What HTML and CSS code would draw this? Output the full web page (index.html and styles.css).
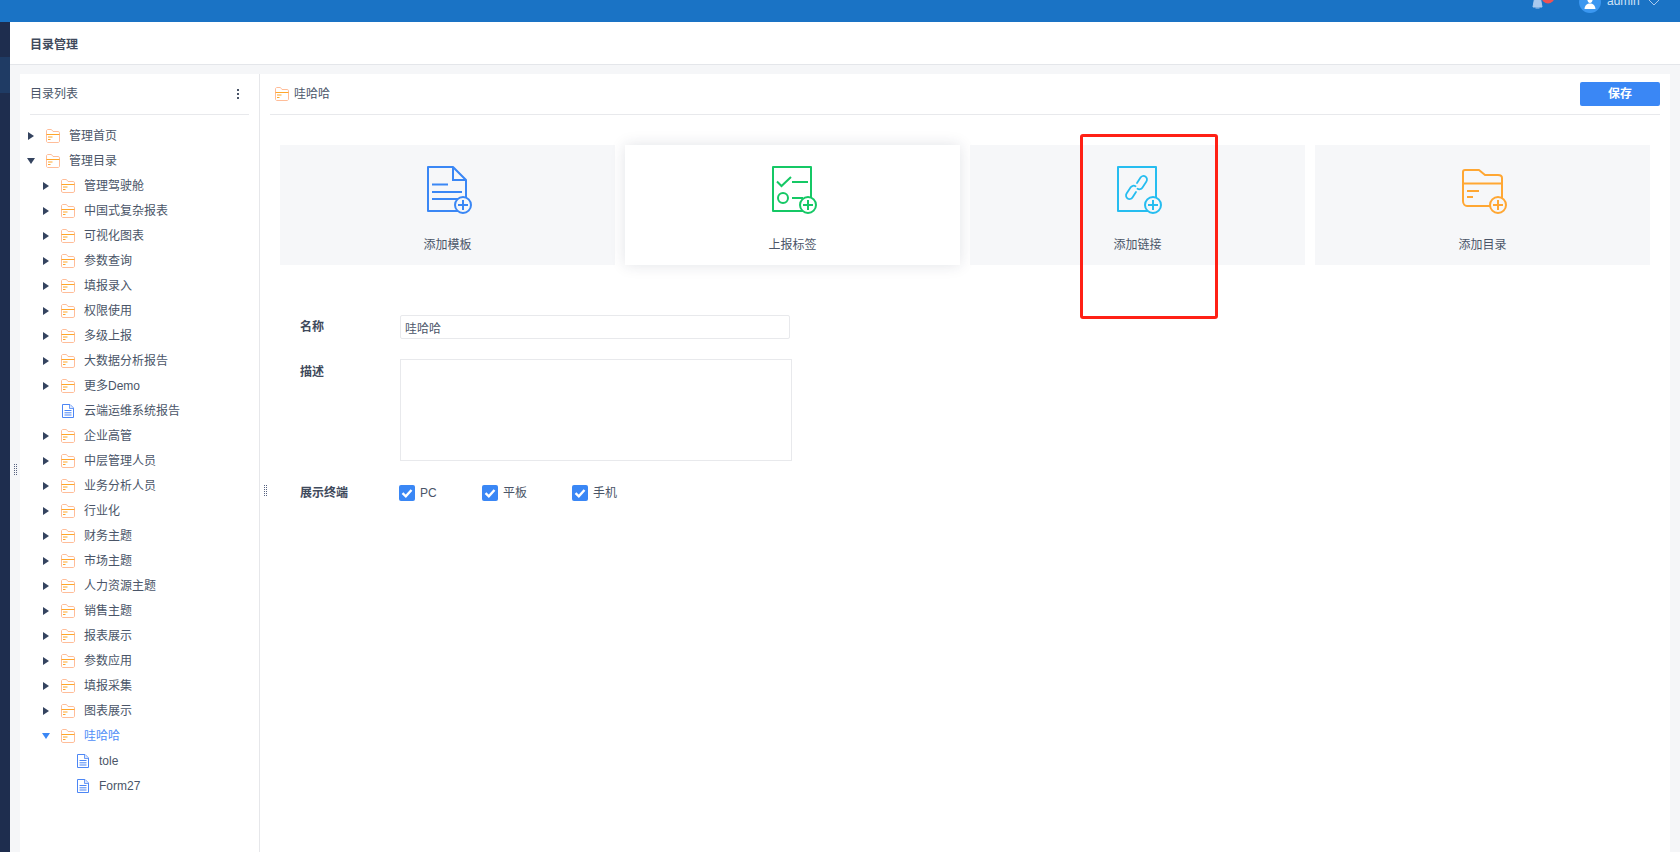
FILE: index.html
```html
<!DOCTYPE html>
<html lang="zh-CN">
<head>
<meta charset="utf-8">
<title>目录管理</title>
<link rel="stylesheet" href="styles.css">
</head>
<body>
<svg class="defs" width="0" height="0" aria-hidden="true">
  <symbol id="folder" viewBox="0 0 14 14">
    <path d="M.5 2C.5 1.2 1 .5 1.8.5H5.400L7 2.500H12.200C13 2.500 13.500 3 13.500 3.800V12C13.500 12.900 13 13.500 12.200 13.500H1.800C1 13.500 .5 12.900 .5 12Z" fill="none" stroke="#ffbd99"/>
    <path d="M.5 5.500H13.500" stroke="#ffa62b"/>
    <path d="M2 8H6.500M2 10.500H4.500" stroke="#ffa62b"/>
  </symbol>
  <symbol id="file" viewBox="0 0 14 14">
    <path d="M1.500.5H9L12.500 4V13.500H1.500Z" fill="none" stroke="#4c86f5"/>
    <path d="M8.500.5V4.500H12.500" fill="#dbe6fd" stroke="#4c86f5" stroke-width=".8"/>
    <path d="M3.500 6.500H10.500M3.500 8.800H10.500M3.500 11H10.500" stroke="#4c86f5"/>
  </symbol>
  <symbol id="tick" viewBox="0 0 16 16">
    <path d="M3.500 8.200L6.800 11.300L12.500 5" fill="none" stroke="#fff" stroke-width="2.400"/>
  </symbol>
</svg>

<header class="topbar">
  <svg class="bell" width="26" height="14" viewBox="0 0 26 14">
    <path d="M1 7L3 -4H8L10 7ZM3.500 8H7.500" fill="#a9c9ee" stroke="#a9c9ee"/>
    <circle cx="16" cy="-3" r="6.500" fill="#ee5253"/>
  </svg>
  <svg class="avatar" width="22" height="22" viewBox="0 0 22 22">
    <circle cx="11" cy="11" r="11" fill="#3b97f0"/>
    <path d="M5.500 18C6 14 8 12.500 11 12.500S16 14 16.500 18ZM8 6A3 3.500 0 0 1 14 6C14 9 13 12 11 12S8 9 8 6Z" fill="#fff"/>
  </svg>
  <span class="user">admin</span>
  <svg class="caret" width="12" height="8" viewBox="0 0 12 8">
    <path d="M1 1L6 6L11 1" fill="none" stroke="#a9c9ee"/>
  </svg>
</header>

<div class="shell">
  <nav class="rail"><div class="rail-active"></div></nav>
  <main class="content">
    <div class="page-head">目录管理</div>
    <div class="work">
      <section class="tree-panel">
        <div class="panel-head">
          <span>目录列表</span>
          <span class="dots"><i></i><i></i><i></i></span>
        </div>
        <ul class="tree">
          <li><div class="row"><span class="arrow"></span><svg class="ico"><use href="#folder"/></svg><span>管理首页</span></div></li>
          <li><div class="row"><span class="arrow open"></span><svg class="ico"><use href="#folder"/></svg><span>管理目录</span></div>
            <ul>
              <li><div class="row"><span class="arrow"></span><svg class="ico"><use href="#folder"/></svg><span>管理驾驶舱</span></div></li>
              <li><div class="row"><span class="arrow"></span><svg class="ico"><use href="#folder"/></svg><span>中国式复杂报表</span></div></li>
              <li><div class="row"><span class="arrow"></span><svg class="ico"><use href="#folder"/></svg><span>可视化图表</span></div></li>
              <li><div class="row"><span class="arrow"></span><svg class="ico"><use href="#folder"/></svg><span>参数查询</span></div></li>
              <li><div class="row"><span class="arrow"></span><svg class="ico"><use href="#folder"/></svg><span>填报录入</span></div></li>
              <li><div class="row"><span class="arrow"></span><svg class="ico"><use href="#folder"/></svg><span>权限使用</span></div></li>
              <li><div class="row"><span class="arrow"></span><svg class="ico"><use href="#folder"/></svg><span>多级上报</span></div></li>
              <li><div class="row"><span class="arrow"></span><svg class="ico"><use href="#folder"/></svg><span>大数据分析报告</span></div></li>
              <li><div class="row"><span class="arrow"></span><svg class="ico"><use href="#folder"/></svg><span>更多Demo</span></div></li>
              <li><div class="row"><span class="arrow none"></span><svg class="ico"><use href="#file"/></svg><span>云端运维系统报告</span></div></li>
              <li><div class="row"><span class="arrow"></span><svg class="ico"><use href="#folder"/></svg><span>企业高管</span></div></li>
              <li><div class="row"><span class="arrow"></span><svg class="ico"><use href="#folder"/></svg><span>中层管理人员</span></div></li>
              <li><div class="row"><span class="arrow"></span><svg class="ico"><use href="#folder"/></svg><span>业务分析人员</span></div></li>
              <li><div class="row"><span class="arrow"></span><svg class="ico"><use href="#folder"/></svg><span>行业化</span></div></li>
              <li><div class="row"><span class="arrow"></span><svg class="ico"><use href="#folder"/></svg><span>财务主题</span></div></li>
              <li><div class="row"><span class="arrow"></span><svg class="ico"><use href="#folder"/></svg><span>市场主题</span></div></li>
              <li><div class="row"><span class="arrow"></span><svg class="ico"><use href="#folder"/></svg><span>人力资源主题</span></div></li>
              <li><div class="row"><span class="arrow"></span><svg class="ico"><use href="#folder"/></svg><span>销售主题</span></div></li>
              <li><div class="row"><span class="arrow"></span><svg class="ico"><use href="#folder"/></svg><span>报表展示</span></div></li>
              <li><div class="row"><span class="arrow"></span><svg class="ico"><use href="#folder"/></svg><span>参数应用</span></div></li>
              <li><div class="row"><span class="arrow"></span><svg class="ico"><use href="#folder"/></svg><span>填报采集</span></div></li>
              <li><div class="row"><span class="arrow"></span><svg class="ico"><use href="#folder"/></svg><span>图表展示</span></div></li>
              <li><div class="row current"><span class="arrow open"></span><svg class="ico"><use href="#folder"/></svg><span>哇哈哈</span></div>
                <ul>
                  <li><div class="row"><span class="arrow none"></span><svg class="ico"><use href="#file"/></svg><span>tole</span></div></li>
                  <li><div class="row"><span class="arrow none"></span><svg class="ico"><use href="#file"/></svg><span>Form27</span></div></li>
                </ul>
              </li>
            </ul>
          </li>
        </ul>
      </section>

      <section class="main-panel">
        <div class="panel-head main-head">
          <span class="crumb"><svg class="ico"><use href="#folder"/></svg><span>哇哈哈</span></span>
          <button class="save" type="button">保存</button>
        </div>

        <div class="cards">
          <div class="card">
            <svg class="card-ico" width="48" height="48" viewBox="0 0 48 48" fill="none" stroke="#3a87f5" stroke-width="2">
              <path d="M1 1H26L39 14V45H1Z" stroke-linejoin="round"/>
              <path d="M26 1V14H39"/>
              <path d="M5 18.500H21M5 26H35M5 33H33"/>
              <circle cx="36" cy="39" r="8" fill="#f6f7f9"/>
              <path d="M31 39H41M36 34V44"/>
            </svg>
            <span>添加模板</span>
          </div>
          <div class="card raised">
            <svg class="card-ico" width="48" height="48" viewBox="0 0 48 48" fill="none" stroke="#15c865" stroke-width="2">
              <rect x="1" y="1" width="38" height="44" stroke-linejoin="round"/>
              <path d="M5 15.500L9.500 20L19 11M20 16H36"/>
              <circle cx="11" cy="32" r="5"/>
              <path d="M20 32H31"/>
              <circle cx="36" cy="39" r="8" fill="#fff"/>
              <path d="M31 39H41M36 34V44"/>
            </svg>
            <span>上报标签</span>
          </div>
          <div class="card">
            <svg class="card-ico" width="48" height="48" viewBox="0 0 48 48" fill="none" stroke="#26bdf0" stroke-width="2">
              <rect x="1" y="1" width="38" height="44" stroke-linejoin="round"/>
              <g transform="translate(19.500 21.500) rotate(33)" stroke-width="1.800" stroke-linecap="round">
                <path d="M-2 -4V-10.500A3.500 3.500 0 0 1 5 -10.500V-3A3.500 3.500 0 0 1 1.500 .5"/>
                <path d="M2 4V10.500A3.500 3.500 0 0 1 -5 10.500V3A3.500 3.500 0 0 1 -1.500 -.5"/>
              </g>
              <circle cx="36" cy="39" r="8" fill="#f6f7f9"/>
              <path d="M31 39H41M36 34V44"/>
            </svg>
            <span>添加链接</span>
          </div>
          <div class="card">
            <svg class="card-ico" width="48" height="48" viewBox="0 0 48 48" fill="none" stroke="#ffa733" stroke-width="2">
              <path d="M1 6V35C1 38 3 40 5 40H36C38 40 40 38 40 36V12C40 10 38 9 36 9H23L17 4H3C2 4 1 5 1 6Z" stroke-linejoin="round"/>
              <path d="M1 17.500H40M5 25H17M5 31H11"/>
              <circle cx="36" cy="39" r="8" fill="#f6f7f9"/>
              <path d="M31 39H41M36 34V44"/>
            </svg>
            <span>添加目录</span>
          </div>
        </div>

        <form class="form">
          <div class="field">
            <label class="label">名称</label>
            <input class="input" type="text" value="哇哈哈">
          </div>
          <div class="field area-field">
            <label class="label">描述</label>
            <textarea class="area"></textarea>
          </div>
          <div class="field check-field">
            <label class="label">展示终端</label>
            <div class="checks">
              <span class="check"><svg class="box"><use href="#tick"/></svg>PC</span>
              <span class="check"><svg class="box"><use href="#tick"/></svg>平板</span>
              <span class="check"><svg class="box"><use href="#tick"/></svg>手机</span>
            </div>
          </div>
        </form>
      </section>
    </div>
  </main>
</div>

<div class="grip grip-left"></div>
<div class="grip grip-right"></div>
<div class="highlight"></div>
</body>
</html>
```

FILE: styles.css
```css
* { box-sizing: border-box; }
html, body { margin: 0; height: 100%; }
body {
  position: relative;
  display: flex;
  flex-direction: column;
  height: 852px;
  overflow: hidden;
  font: 12px/18px "Liberation Sans", "Noto Sans CJK SC", sans-serif;
  color: #4a5568;
  background: #f5f6f8;
}
.defs { position: absolute; }

.topbar {
  flex: 0 0 22px;
  display: flex;
  align-items: flex-start;
  overflow: hidden;
  padding-left: 1532px;
  background: #1a73c5;
}
.bell { flex: none; }
.avatar { flex: none; margin: -9px 0 0 21px; }
.user { margin: -8px 0 0 6px; color: #cfe2f7; line-height: 18px; }
.caret { flex: none; margin: -1px 0 0 8px; }

.shell { flex: 1; display: flex; min-height: 0; }
.rail { flex: 0 0 10px; background: #1e2d4e; }
.rail-active { height: 36px; margin-top: 35px; background: #1f3b64; }
.content { flex: 1; display: flex; flex-direction: column; min-width: 0; }

.page-head {
  flex: 0 0 43px;
  padding: 14px 0 0 20px;
  font-weight: 700;
  color: #3f4a5c;
  background: #fff;
  border-bottom: 1px solid #e4e6ea;
}
.work { flex: 1; display: flex; min-height: 0; padding: 9px 10px 0; }

.tree-panel {
  flex: 0 0 240px;
  padding: 0 10px;
  background: #fff;
  border-right: 1px solid #e6e7ea;
}
.panel-head {
  display: flex;
  align-items: center;
  justify-content: space-between;
  height: 41px;
  padding-right: 10px;
  border-bottom: 1px solid #e8e9ec;
}
.dots { display: flex; flex-direction: column; gap: 2px; }
.dots i { width: 2px; height: 2px; background: #4a5568; }

.tree, .tree ul { margin: 0; padding: 0; list-style: none; }
.tree { margin: 8px 0 0 -10px; }
.tree ul { padding-left: 15px; }
.row { display: flex; align-items: center; height: 25px; padding-left: 6px; }
.arrow { flex: 0 0 10px; display: flex; justify-content: center; align-items: center; }
.arrow::before {
  content: "";
  border-style: solid;
  border-width: 4px 0 4px 6px;
  border-color: transparent transparent transparent #34435f;
}
.arrow.open::before {
  border-width: 6px 4.500px 0;
  border-color: #34435f transparent transparent;
}
.arrow.none::before { display: none; }
.ico { flex: none; width: 14px; height: 14px; margin: 0 9px 0 10px; }
.current { color: #4f8ef7; }
.current .arrow.open::before { border-top-color: #3a87f5; }

.main-panel { flex: 1; min-width: 0; background: #fff; padding: 0 10px; }
.main-head { padding-right: 0; }
.crumb { display: flex; align-items: center; }
.crumb .ico { margin: 0 5px 0 5px; }
.save {
  width: 80px;
  height: 24px;
  padding: 0;
  border: 0;
  border-radius: 2px;
  color: #fff;
  font: inherit;
  font-weight: 700;
  background: #3a87f5;
}

.cards {
  display: grid;
  grid-template-columns: repeat(4, 335px);
  gap: 10px;
  margin: 30px 0 0 10px;
}
.card {
  display: flex;
  flex-direction: column;
  align-items: center;
  height: 120px;
  padding-top: 21px;
  background: #f6f7f9;
}
.card.raised { background: #fff; box-shadow: 0 0 14px rgba(30, 40, 70, .13); }
.card-ico { margin: 0 0 22px 7px; overflow: visible; }

.form { margin: 50px 0 0 30px; }
.field { display: flex; align-items: center; }
.label { flex: 0 0 100px; font-weight: 700; color: #3f4a5c; }
.input {
  width: 390px;
  height: 24px;
  padding: 0 4px;
  border: 1px solid #e8e9ec;
  border-radius: 2px;
  font: inherit;
  color: #4a5568;
  outline: 0;
}
.area-field { align-items: flex-start; margin-top: 20px; }
.area-field .label { padding-top: 4px; }
.area {
  display: block;
  width: 392px;
  height: 102px;
  border: 1px solid #e8e9ec;
  resize: none;
  outline: 0;
}
.check-field { margin-top: 23px; }
.checks {
  display: grid;
  grid-template-columns: 83px 90px auto;
  margin-left: -1px;
}
.check { display: flex; align-items: center; }
.box {
  width: 16px;
  height: 16px;
  margin-right: 5px;
  border-radius: 2px;
  background: #3a87f5;
}

.grip {
  position: absolute;
  width: 5px;
  height: 12px;
  background-image: conic-gradient(#55617f 25%, transparent 0);
  background-size: 2px 2px;
}
.grip-left { left: 13px; top: 464px; }
.grip-right { left: 263px; top: 485px; }
.highlight {
  position: absolute;
  left: 1080px;
  top: 134px;
  width: 138px;
  height: 185px;
  border: 3px solid #ff2015;
  border-radius: 3px;
}
```
